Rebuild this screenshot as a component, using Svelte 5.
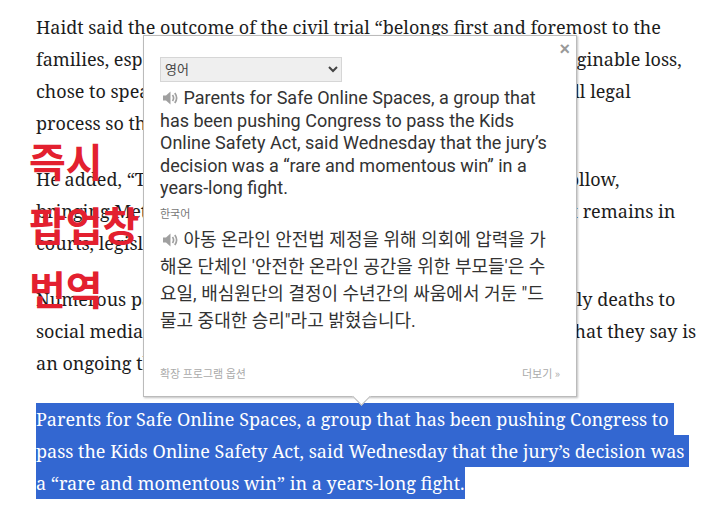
<script>
  const english = "Parents for Safe Online Spaces, a group that has been pushing Congress to pass the Kids Online Safety Act, said Wednesday that the jury’s decision was a “rare and momentous win” in a years-long fight.";
  const korean = "아동 온라인 안전법 제정을 위해 의회에 압력을 가해온 단체인 '안전한 온라인 공간을 위한 부모들'은 수요일, 배심원단의 결정이 수년간의 싸움에서 거둔 \"드물고 중대한 승리\"라고 밝혔습니다.";
  const selected = [
    "Parents for Safe Online Spaces, a group that has been pushing Congress to",
    "pass the Kids Online Safety Act, said Wednesday that the jury’s decision was",
    "a “rare and momentous win” in a years-long fight."
  ];
</script>

{#snippet speaker()}
  <svg class="speaker" viewBox="0 0 16 16" width="16" height="16" aria-hidden="true">
    <path d="M1 5.500h3L8.500 1.500v13L4 10.500H1z" fill="#a0a0a0" />
    <path d="M10.500 5c1.300 1.800 1.300 4.200 0 6M12.800 3c2.200 3 2.200 7 0 10" fill="none" stroke="#a0a0a0" stroke-width="1.700" />
  </svg>
{/snippet}

<div class="page">
  <article>
    <p>Haidt said the outcome of the civil trial “belongs first and foremost to the<br />families, especially those who have suffered that utmost unimaginable loss,<br />chose to speak out and have carried their case through their full legal<br />process so that others would not have to.”</p>
    <p>He added, “The trial is only the beginning of what I hope will follow,<br />bringing Meta to account for all its many choices, and that fight remains in<br />courts, legislatures and homes around the country.”</p>
    <p>Numerous parents everywhere have linked their children’s early deaths to<br />social media platforms and have spoken out publicly against what they say is<br />an ongoing threat to the safety of young people online.</p>
    <p class="selection">
      {#each selected as line}
        <span>{line}</span>
      {/each}
    </p>
  </article>

  <div class="callout">
    <span>즉시</span>
    <span>팝업창</span>
    <span>번역</span>
  </div>

  <div class="bubble">
    <button class="close" aria-label="닫기">×</button>
    <select>
      <option>영어</option>
    </select>
    <div class="source">{@render speaker()} {english}</div>
    <div class="target-lang">한국어</div>
    <div class="target">{@render speaker()} {korean}</div>
    <div class="footer">
      <span>확장 프로그램 옵션</span>
      <span>더보기 »</span>
    </div>
    <div class="arrow"></div>
  </div>
</div>

<style>
  :global(body) {
    margin: 0;
    background: #fff;
  }

  .page {
    position: relative;
    width: 720px;
    height: 512px;
    overflow: hidden;
  }

  article {
    padding: 11px 24px 0 36px;
    font-family: "Noto Serif", "DejaVu Serif", serif;
    font-size: 18px;
    line-height: 32px;
    color: #1c1c1c;
    white-space: nowrap;
  }

  p {
    margin: 0 0 24px;
  }

  .selection span {
    display: block;
    width: fit-content;
    padding-right: 5px;
    background: #3367d1;
    color: #fff;
  }

  .selection span:last-child {
    padding-right: 0;
  }

  .callout {
    position: absolute;
    left: 29px;
    top: 132px;
    display: flex;
    flex-direction: column;
    gap: 8px;
    font-family: "Noto Sans CJK KR", sans-serif;
    font-size: 40px;
    font-weight: 700;
    line-height: 56px;
    color: #e3202f;
  }

  .bubble {
    position: absolute;
    left: 143px;
    top: 35px;
    box-sizing: border-box;
    width: 434px;
    height: 362px;
    padding: 21px 16px 0;
    display: flex;
    flex-direction: column;
    background: #fff;
    border: 1px solid #bbb;
    box-shadow: 1px 1px 2px rgba(0, 0, 0, 0.25);
    font-family: Roboto, "Noto Sans CJK KR", sans-serif;
    color: #333;
  }

  .close {
    position: absolute;
    top: 4px;
    right: 6px;
    padding: 0;
    border: none;
    background: none;
    font-family: Arial, "Liberation Sans", sans-serif;
    font-size: 18px;
    font-weight: 700;
    line-height: 18px;
    color: #999;
  }

  select {
    width: 182px;
    height: 25px;
    padding: 0 0 3px 0;
    border: 1px solid #d6d6d6;
    border-radius: 0;
    background-color: #efefef;
    font-family: "Noto Sans CJK KR", sans-serif;
    font-size: 13px;
    color: #444;
  }

  .source {
    margin-top: 5px;
    margin-right: 7px;
    font-size: 18px;
    line-height: 22.500px;
  }

  .speaker {
    margin-left: 2px;
    margin-right: 1px;
    vertical-align: -2px;
  }

  .target-lang {
    margin-top: 6px;
    font-family: "Noto Sans CJK KR", sans-serif;
    font-size: 11px;
    line-height: 14px;
    color: #777;
  }

  .target {
    margin-top: 6px;
    margin-right: 7px;
    font-size: 18px;
    line-height: 27px;
  }

  .footer {
    margin-top: auto;
    margin-bottom: 15px;
    display: flex;
    justify-content: space-between;
    font-family: "Noto Sans CJK KR", sans-serif;
    font-size: 11px;
    line-height: 16px;
    color: #aaa;
  }

  .arrow {
    position: absolute;
    left: 211px;
    bottom: -7px;
    width: 12px;
    height: 12px;
    background: #fff;
    border-right: 1px solid #bbb;
    border-bottom: 1px solid #bbb;
    transform: rotate(45deg);
  }
</style>
